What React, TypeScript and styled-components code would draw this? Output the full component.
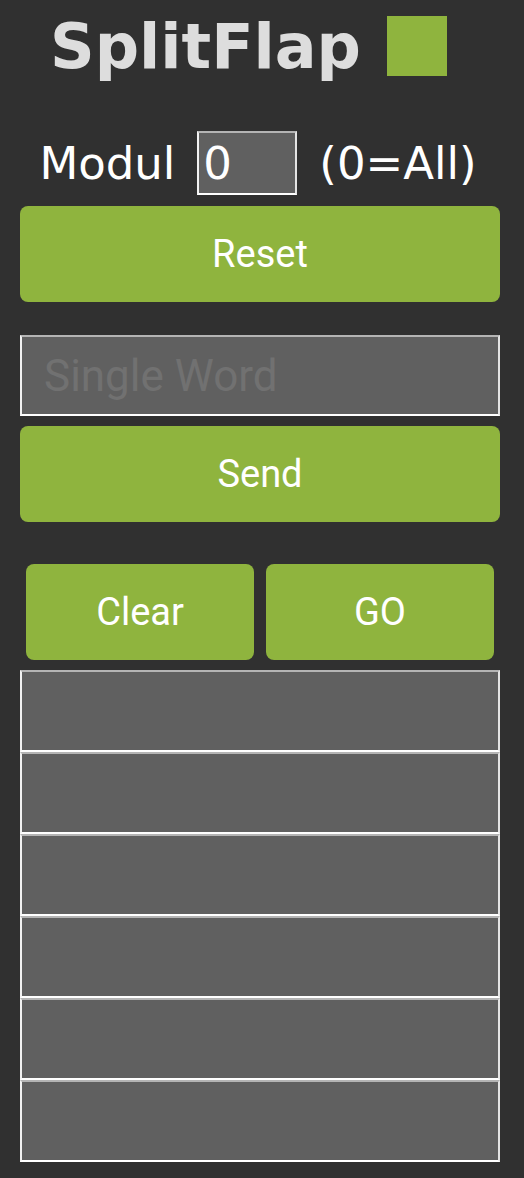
import React from "react";
import styled, {createGlobalStyle} from "styled-components";

const GREEN = "#8fb43e";

const GlobalStyle = createGlobalStyle`
  html, body {
    margin: 0;
    padding: 0;
    background: #303030;
  }
`;

const Page = styled.div`
  width: 480px;
  padding: 0 24px 16px 20px;
  display: flex;
  flex-direction: column;
`;

const Title = styled.header`
  display: flex;
  align-items: center;
  justify-content: center;
  gap: 26px;
  height: 94px;
  margin-right: 23px;
`;

const Logo = styled.h1`
  margin: 0;
  font-family: "DejaVu Sans", Verdana, sans-serif;
  font-weight: bold;
  font-size: 62px;
  line-height: 1;
  color: #dddddd;
`;

const Square = styled.div`
  width: 60px;
  height: 60px;
  background: ${GREEN};
  margin-top: -3px;
`;

const ModulRow = styled.div`
  display: flex;
  align-items: center;
  justify-content: center;
  margin-top: 37px;
  height: 64px;
  gap: 22px;
  margin-right: 4px;
  font-family: "DejaVu Sans", Verdana, sans-serif;
  font-size: 45px;
  color: #ffffff;
`;

const Field = styled.input<{ $h: number }>`
  box-sizing: border-box;
  height: ${({$h}) => $h}px;
  background: #606060;
  border-style: solid;
  border-width: 2px;
  border-color: #b4b4b4 #e4e4e4 #ffffff #f2f2f2;
  outline: none;
  color: #ffffff;
  font-family: Roboto, "Liberation Sans", sans-serif;
  font-size: 44px;
  padding: 0 22px;
  margin: 0;

  &::placeholder {
    color: #717171;
  }
`;

const SmallField = styled(Field)`
  width: 100px;
  padding: 0 4px;
  font-family: "DejaVu Sans", Verdana, sans-serif;
  font-size: 45px;
`;

const Button = styled.button`
  box-sizing: border-box;
  height: 96px;
  border: none;
  border-radius: 8px;
  background: ${GREEN};
  color: #ffffff;
  font-family: Roboto, "Liberation Sans", sans-serif;
  font-size: 38px;
  cursor: pointer;
  padding: 0;
`;

const Stack = styled.div<{ $gap: number; $top: number }>`
  display: flex;
  flex-direction: column;
  gap: ${({$gap}) => $gap}px;
  margin-top: ${({$top}) => $top}px;
`;

const ButtonPair = styled.div`
  display: grid;
  grid-template-columns: 1fr 1fr;
  gap: 12px;
  padding: 0 6px;
  margin-top: 42px;
`;

const Rows = styled.div`
  display: flex;
  flex-direction: column;
  margin-top: 10px;
`;

export default function App() {
  return (
    <>
      <GlobalStyle/>
      <Page>
        <Title>
          <Logo>SplitFlap</Logo>
          <Square/>
        </Title>
        <ModulRow>
          <span>Modul</span>
          <SmallField $h={64} defaultValue="0"/>
          <span>(0=All)</span>
        </ModulRow>
        <Stack $gap={0} $top={11}>
          <Button>Reset</Button>
        </Stack>
        <Stack $gap={10} $top={33}>
          <Field $h={81} placeholder="Single Word"/>
          <Button>Send</Button>
        </Stack>
        <ButtonPair>
          <Button>Clear</Button>
          <Button>GO</Button>
        </ButtonPair>
        <Rows>
          {[0, 1, 2, 3, 4, 5].map(i => (
            <Field key={i} $h={82}/>
          ))}
        </Rows>
      </Page>
    </>
  );
}
